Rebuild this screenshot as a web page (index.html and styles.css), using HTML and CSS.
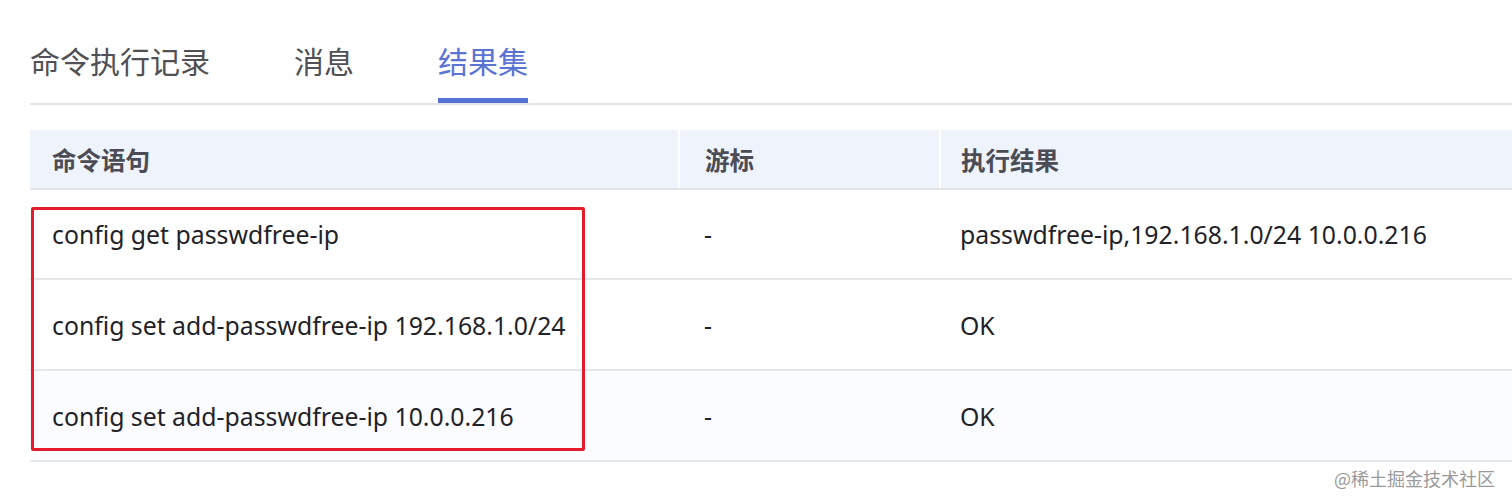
FILE: index.html
```html
<!DOCTYPE html>
<html lang="zh-CN">
<head>
<meta charset="utf-8">
<title>结果集</title>
<link rel="stylesheet" href="styles.css">
</head>
<body>
<div class="page">
  <div class="tabs">
    <div class="tab">命令执行记录</div>
    <div class="tab">消息</div>
    <div class="tab active">结果集</div>
  </div>
  <div class="table-wrap">
    <table class="grid">
      <thead>
        <tr>
          <th class="c1">命令语句</th>
          <th class="c2">游标</th>
          <th class="c3">执行结果</th>
        </tr>
      </thead>
      <tbody>
        <tr>
          <td>config get passwdfree-ip</td>
          <td>-</td>
          <td>passwdfree-ip,192.168.1.0/24 10.0.0.216</td>
        </tr>
        <tr class="tall">
          <td>config set add-passwdfree-ip 192.168.1.0/24</td>
          <td>-</td>
          <td>OK</td>
        </tr>
        <tr class="tall alt">
          <td>config set add-passwdfree-ip 10.0.0.216</td>
          <td>-</td>
          <td>OK</td>
        </tr>
      </tbody>
    </table>
    <div class="highlight"></div>
  </div>
  <div class="watermark">@稀土掘金技术社区</div>
</div>
</body>
</html>
```

FILE: styles.css
```css
html, body {
  margin: 0;
  padding: 0;
  background: #ffffff;
}
body {
  font-family: "Noto Sans", "Noto Sans CJK SC", sans-serif;
  color: #1f2329;
  overflow: hidden;
}
.page {
  position: relative;
  width: 1512px;
  height: 503px;
  padding-left: 30px;
  box-sizing: border-box;
}
.tabs {
  display: flex;
  gap: 84px;
  padding-top: 38px;
  border-bottom: 2px solid #e3e4e6;
  box-sizing: border-box;
  height: 105px;
}
.tab {
  font-family: "Noto Sans CJK SC", sans-serif;
  font-size: 30px;
  line-height: 44px;
  color: #505055;
  height: 65px;
  box-sizing: border-box;
}
.tab.active {
  color: #5a73d4;
  border-bottom: 5px solid #5672d6;
}
.table-wrap {
  position: relative;
  margin-top: 25px;
}
.grid {
  border-collapse: collapse;
  table-layout: fixed;
  width: 1520px;
}
.grid th {
  background: #eff3fb;
  height: 58px;
  text-align: left;
  font-family: "Noto Sans CJK SC", sans-serif;
  font-weight: 700;
  font-size: 24.5px;
  color: #4b4c55;
  padding: 0 0 0 22px;
  border-bottom: 2px solid #e2e4e8;
  border-right: 2px solid #ffffff;
}
.grid th.c1 { width: 626px; }
.grid th.c2 { width: 234px; padding-left: 25px; }
.grid th.c3 { padding-left: 20px; }
.grid td {
  height: 88px;
  padding: 0 0 0 22px;
  font-size: 24.8px;
  color: #1f2329;
  border-bottom: 2px solid #e6e7ea;
  white-space: nowrap;
  vertical-align: middle;
}
.grid tr.tall td { height: 89px; }
.grid td:nth-child(2) { padding-left: 25px; }
.grid td:nth-child(3) { padding-left: 20px; }
.grid tr.alt td { background: #fbfcff; }
.highlight {
  position: absolute;
  left: 1px;
  top: 77px;
  width: 554px;
  height: 244px;
  border: 3px solid #e31b2a;
  border-radius: 2px;
  box-sizing: border-box;
  pointer-events: none;
}
.watermark {
  position: absolute;
  right: 17px;
  top: 465px;
  font-family: "Noto Sans CJK SC", sans-serif;
  font-size: 18px;
  color: #9a9a9a;
}
```
